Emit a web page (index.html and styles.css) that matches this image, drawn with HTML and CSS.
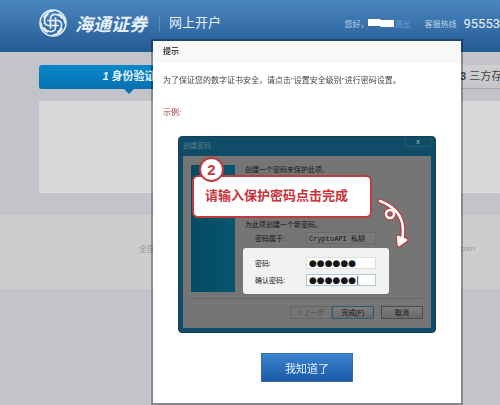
FILE: index.html
```html
<!DOCTYPE html>
<html lang="zh-CN">
<head>
  <meta charset="UTF-8">
  <meta name="viewport" content="width=device-width, initial-scale=1.0">
  <title>海通证券 | 网上开户</title>
  <link rel="stylesheet" href="styles.css">
</head>
<body>
  <header class="header">
    <svg class="logo" viewBox="0 0 28 28" fill="none" stroke="#e6effa" stroke-width="1.7" stroke-linecap="round" aria-hidden="true">
      <defs>
        <g id="arm">
          <path d="M11.5 14V9.500Q12 5 17 5.500Q21 6 23 9"/>
          <path d="M16.500 14V9"/>
          <path d="M5 8Q8 2.500 14 2"/>
        </g>
      </defs>
      <circle cx="14" cy="14" r="13" stroke-width="1.500"/>
      <use href="#arm"/>
      <use href="#arm" transform="rotate(90 14 14)"/>
      <use href="#arm" transform="rotate(180 14 14)"/>
      <use href="#arm" transform="rotate(270 14 14)"/>
    </svg>
    <span class="brand">海通证券</span>
    <span class="site">网上开户</span>
    <div class="user">
      <span>您好，</span>
      <svg class="mask" viewBox="0 0 26 8" aria-hidden="true"><path d="M0 0h12l1 1h13v7H13l-1-1H0z" fill="#fff"/></svg>
      <a href="#">退出</a>
      <span class="hotline">客服热线</span>
      <strong class="phone">95553</strong>
    </div>
  </header>

  <main class="main">
    <ol class="steps">
      <li class="step active"><i>1</i> 身份验证</li>
      <li class="step"></li>
      <li class="step"><b>3</b> 三方存</li>
    </ol>
    <div class="panel"></div>
  </main>

  <footer class="footer">
    <span>全国</span>
    <span>.com</span>
  </footer>

  <div class="overlay">
    <section class="modal" role="dialog" aria-labelledby="modalTitle">
      <h2 class="modal-title" id="modalTitle">提示</h2>
      <div class="modal-body">
        <p class="message">为了保证您的数字证书安全，请点击"设置安全级别"进行密码设置。</p>
        <p class="example">示例:</p>

        <div class="window">
          <div class="window-title">
            <span>创建密码</span>
            <button class="close" aria-label="关闭">x</button>
          </div>
          <div class="window-body">
            <div class="content">
              <div class="side"></div>
              <form class="form">
                <p class="intro">创建一个密码来保护此项。</p>
                <p class="hint">为此项创建一个新密码。</p>
                <div class="field">
                  <label for="owner">密码属于:</label>
                  <input id="owner" type="text" value="CryptoAPI 私钥" readonly>
                </div>
                <div class="highlight">
                  <div class="field">
                    <label for="pwd">密码:</label>
                    <input id="pwd" type="text" value="●●●●●●">
                  </div>
                  <div class="field">
                    <label for="pwd2">确认密码:</label>
                    <input id="pwd2" class="focused" type="text" value="●●●●●●|">
                  </div>
                </div>
              </form>
            </div>
            <div class="actions">
              <button class="prev" disabled>&lt; 上一步</button>
              <button class="finish">完成(F)</button>
              <button class="cancel">取消</button>
            </div>
          </div>

          <div class="callout">请输入保护密码点击完成</div>
          <span class="badge">2</span>
          <svg class="pointer" viewBox="0 0 34 52" fill="none" stroke-linecap="round" stroke-linejoin="round" aria-hidden="true">
            <g stroke="#c03a3e" stroke-width="5">
              <path d="M4 4Q22 11 26 25Q28 34 26 43"/>
              <circle cx="14" cy="17" r="4"/>
              <path d="M22 40l1 8 7-5z"/>
            </g>
            <g stroke="#fff" stroke-width="2.500">
              <path d="M4 4Q22 11 26 25Q28 34 26 43"/>
              <circle cx="14" cy="17" r="4"/>
              <path d="M22 40l1 8 7-5z" fill="#fff"/>
            </g>
          </svg>
        </div>

        <button class="confirm">我知道了</button>
      </div>
    </section>
  </div>
</body>
</html>
```

FILE: styles.css
```css
* {
  box-sizing: border-box;
}

body {
  margin: 0;
  min-height: 100vh;
  overflow: hidden;
  background: #c3c4c9;
  font-family: "Liberation Sans", "Noto Sans CJK SC", sans-serif;
  font-size: 8px;
  color: #444;
}

p, h2, ol {
  margin: 0;
  padding: 0;
}

button, input {
  font: inherit;
  color: inherit;
  margin: 0;
  padding: 0;
}

.header {
  display: flex;
  align-items: center;
  height: 52px;
  padding: 0 0 6px 39px;
  background: linear-gradient(#4b86be, #3870aa 50%, #225b92);
  color: #e6effa;
  white-space: nowrap;
}

.logo {
  width: 28px;
  height: 28px;
  flex: none;
}

.brand {
  margin-left: 8px;
  font-size: 18px;
  font-style: italic;
  font-weight: bold;
}

.site {
  margin-left: 12px;
  padding-left: 9px;
  border-left: 1px solid #5a8cbd;
  font-size: 13px;
  line-height: 16px;
}

.user {
  display: flex;
  align-items: center;
  margin-left: auto;
  color: #bdd4ea;
}

.mask {
  width: 26px;
  height: 8px;
}

.user a {
  color: #6aa3d5;
  text-decoration: none;
}

.hotline {
  margin-left: 14px;
}

.phone {
  margin-left: 7px;
  font-family: Roboto, sans-serif;
  font-size: 13px;
  font-weight: normal;
  color: #e6effa;
}

.main {
  padding: 13px 0 0 39px;
}

.steps {
  display: grid;
  grid-template-columns: 180px 1fr 40px;
  height: 24px;
  list-style: none;
  background: linear-gradient(#d0d0d3, #c6c6ca);
  border-bottom: 1px solid #a6a7ab;
}

.step {
  position: relative;
  font-size: 11px;
  line-height: 23px;
  text-align: right;
  white-space: nowrap;
}

.active {
  height: 24px;
  border-radius: 3px;
  background: linear-gradient(#0788c8, #0870b0);
  color: #e3f2fb;
  font-weight: bold;
  text-align: center;
}

.active::after {
  content: "";
  position: absolute;
  top: 100%;
  left: 50%;
  margin-left: -5px;
  border: 5px solid transparent;
  border-top-color: #0870b0;
  border-bottom: 0;
}

.panel {
  height: 92px;
  margin-top: 12px;
  background: #d8d8d8;
  border-bottom: 1px solid #dedede;
}

.footer {
  display: flex;
  justify-content: space-between;
  align-items: center;
  height: 74px;
  margin-top: 22px;
  padding: 0 25px 8px 139px;
  background: #cdcdcd;
  color: #999;
}

.overlay {
  position: fixed;
  inset: 0;
  padding: 41px 39px 2px 153px;
}

.modal {
  height: 100%;
  background: #fff;
  box-shadow: 0 0 0 2px rgba(0, 0, 0, 0.3);
}

.modal-title {
  height: 22px;
  padding-left: 10px;
  background: #f8f8f8;
  font-size: 8px;
  line-height: 22px;
}

.modal-body {
  display: flex;
  flex-direction: column;
  padding: 11px 25px 0;
}

.message,
.example {
  margin-left: -15px;
  line-height: 14px;
  white-space: nowrap;
}

.example {
  margin-top: 18px;
  color: #a83232;
}

.window {
  position: relative;
  margin-top: 16px;
  padding: 0 4px 4px;
  border-radius: 4px;
  background: #104c67;
  border: 1px solid #174052;
  font-size: 7px;
  color: #151515;
}

.window-title {
  display: flex;
  justify-content: space-between;
  height: 19px;
  line-height: 18px;
  color: #5d7f8d;
}

.close {
  width: 26px;
  height: 10px;
  border: 1px solid #225a73;
  border-top: 0;
  background: #124b64;
  color: #b5c8d0;
  line-height: 7px;
}

.window-body {
  padding: 9px 8px;
  background: #757575;
}

.content {
  display: grid;
  grid-template-columns: 44px 1fr;
  column-gap: 8px;
  padding-bottom: 4px;
  border-bottom: 1px solid #666;
}

.side {
  margin-bottom: 2px;
  background: linear-gradient(90deg, #044b64, #06566f);
}

.intro,
.hint {
  padding-left: 2px;
  line-height: 9px;
}

.hint {
  margin-top: 46px;
}

.field {
  display: grid;
  grid-template-columns: 51px 70px;
  align-items: center;
  margin: 3px 0 4px 12px;
}

.field input {
  height: 12px;
  padding-left: 2px;
  border: 1px solid #6b6b6b;
  background: #797979;
  font-family: "Liberation Mono", "Noto Sans CJK SC", monospace;
}

.highlight {
  width: 146px;
  padding: 9px 0 8px;
  border-radius: 3px;
  background: #f2f2f2;
}

.highlight .field {
  margin: 0 0 5px 12px;
}

.highlight .field:last-child {
  margin-bottom: 0;
}

.highlight input {
  border-color: #ddd;
  background: #fff;
  font-family: "DejaVu Sans", sans-serif;
  font-size: 9px;
  line-height: 10px;
}

.highlight .focused {
  border-color: #a8cdd8;
}

.actions {
  display: flex;
  justify-content: flex-end;
  padding: 7px 0 0;
}

.actions button {
  width: 42px;
  height: 13px;
  border: 1px solid #4b4b4b;
  background: linear-gradient(#7d7d7d, #696969);
  line-height: 10px;
}

.actions .prev {
  border-color: #666;
  background: #757575;
  color: #505050;
}

.actions .finish {
  border-color: #285e6e;
}

.actions .cancel {
  margin-left: 7px;
}

.callout {
  position: absolute;
  top: 38px;
  left: 13px;
  width: 180px;
  height: 43px;
  padding-left: 11px;
  border: 2px solid #c03a3e;
  border-radius: 6px;
  background: #fff;
  color: #c8333a;
  font-size: 13px;
  font-weight: bold;
  line-height: 38px;
  white-space: nowrap;
}

.badge {
  position: absolute;
  top: 20px;
  left: 20px;
  width: 25px;
  height: 25px;
  border: 2px solid #c03a3e;
  border-radius: 50%;
  background: #fff;
  color: #c03a3e;
  font-size: 15px;
  font-weight: bold;
  line-height: 21px;
  text-align: center;
}

.pointer {
  position: absolute;
  top: 60px;
  left: 197px;
  width: 34px;
  height: 52px;
}

.confirm {
  align-self: center;
  width: 92px;
  height: 29px;
  margin-top: 20px;
  border: 1px solid #3a6da5;
  background: linear-gradient(#3a83cd, #1c5aa8);
  color: #e6f2ff;
  font-size: 11px;
}
```
